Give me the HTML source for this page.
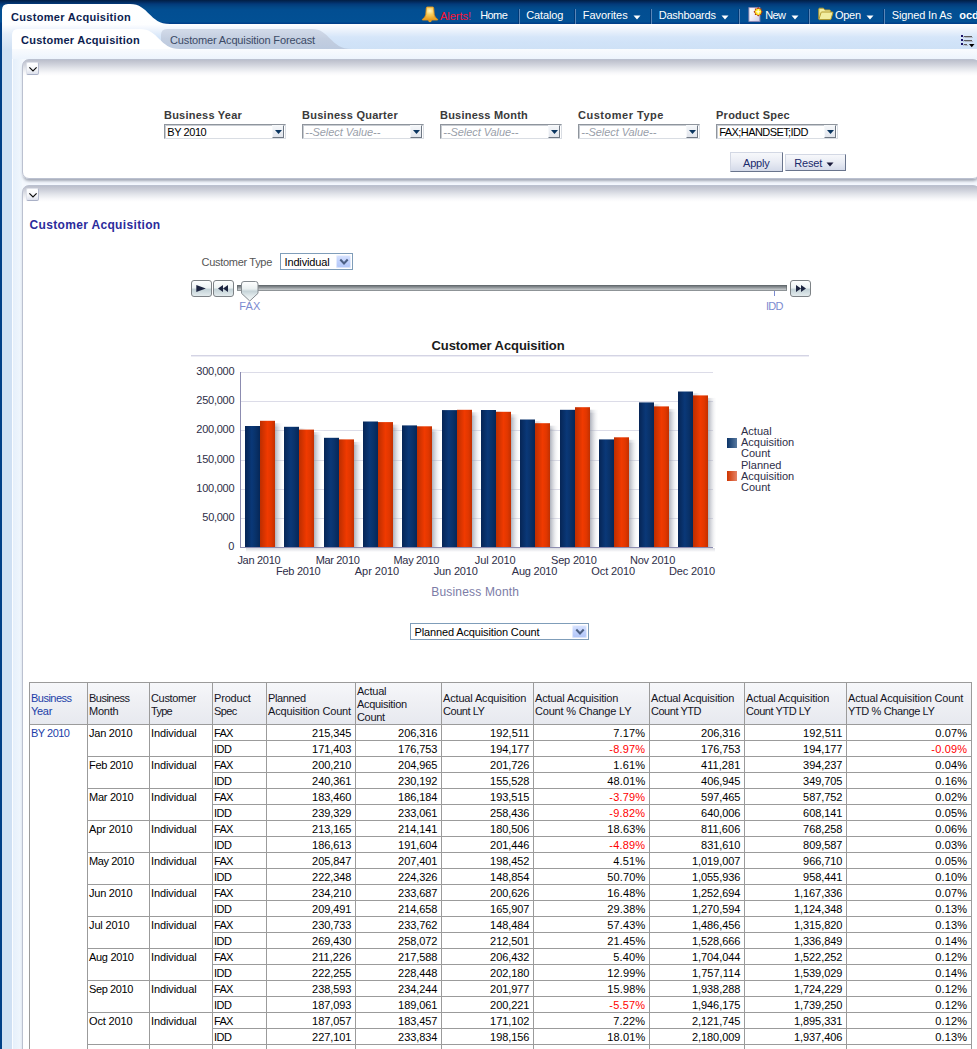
<!DOCTYPE html>
<html><head><meta charset="utf-8"><title>Customer Acquisition</title>
<style>
html,body{margin:0;padding:0;background:#fff;}
body{width:977px;height:1049px;overflow:hidden;font-family:"Liberation Sans",sans-serif;}
#page{position:relative;width:977px;height:1049px;overflow:hidden;background:#fff;}
.t{position:absolute;white-space:nowrap;font-family:"Liberation Sans",sans-serif;}
svg{position:absolute;overflow:visible}

</style></head>
<body>
<div id="page">
<div style="position:absolute;left:0px;top:24px;width:977px;height:25px;background:linear-gradient(#ffffff 0,#f6f9fe 3px,#e6effb 8px,#d6e6f9 13px,#d1e3f8 18px,#cee1f6 25px)"></div>
<div style="position:absolute;left:0px;top:49px;width:977px;height:1000px;background:#f4f8fe"></div>
<div style="position:absolute;left:2px;top:24px;width:10px;height:1025px;background:linear-gradient(#ffffff 0,#e3edf9 10px,#cfe0f3 26px,#cfe0f3 100%)"></div>
<div style="position:absolute;left:12px;top:49px;width:1px;height:1000px;background:#fbfdff"></div>
<div style="position:absolute;left:13px;top:49px;width:9px;height:1000px;background:linear-gradient(90deg,#e6f0fb,#f1f7fd)"></div>
<div style="position:absolute;left:0px;top:0px;width:2px;height:1049px;background:#003f87"></div>
<div style="position:absolute;left:0px;top:0px;width:977px;height:24px;background:linear-gradient(#021e44 0,#022b5f 2px,#033a7a 4px,#034886 7px,#024e92 10px,#025094 22px,#003f8a 23px,#003f8a 24px)"></div>
<svg style="left:0;top:0" width="200" height="30" viewBox="0 0 200 30">
<defs><linearGradient id="tg" x1="0" y1="0" x2="0" y2="1"><stop offset="0" stop-color="#ffffff"/><stop offset="1" stop-color="#fdfeff"/></linearGradient></defs>
<path d="M2,25 L2,10 Q2,4 8,4 L130,4 C149,4 149,24 170,24 L170,25 Z" fill="url(#tg)"/>
</svg>
<svg style="left:0;top:24" width="400" height="30" viewBox="0 0 400 30">
<defs>
<linearGradient id="ig" x1="0" y1="0" x2="0" y2="1"><stop offset="0" stop-color="#d3dbe9"/><stop offset="0.5" stop-color="#c3cee0"/><stop offset="1" stop-color="#bccadf"/></linearGradient>
</defs>
<path d="M161,25 L161,11 Q161,5 167,5 L312,5 C330,5 330,25 352,25 Z" fill="url(#ig)"/>
<path d="M12,26 L12,11 Q12,5 18,5 L140,5 C159,5 159,25 180,25 L180,26 Z" fill="#ffffff"/>
</svg>
<div style="position:absolute;left:12px;top:49px;width:965px;height:10px;background:linear-gradient(#f9fbfe,#edf4fd)"></div>
<span class="t" id="t0" style="left:11.00px;top:11.00px;font-size:11px;line-height:13px;font-weight:bold;font-style:normal;color:#0c1d4f;letter-spacing:0.306px;">Customer Acquisition</span>
<span class="t" id="t1" style="left:21.00px;top:34.00px;font-size:11px;line-height:13px;font-weight:bold;font-style:normal;color:#0c1d4f;letter-spacing:0.256px;">Customer Acquisition</span>
<span class="t" id="t2" style="left:170.00px;top:34.00px;font-size:11px;line-height:13px;font-weight:normal;font-style:normal;color:#3b4a66;letter-spacing:-0.144px;">Customer Acquisition Forecast</span>
<span class="t" id="t3" style="left:440.00px;top:10.00px;font-size:11px;line-height:13px;font-weight:normal;font-style:normal;color:#ff1232;letter-spacing:-0.027px;">Alerts!</span>
<span class="t" id="t4" style="left:480.20px;top:9.00px;font-size:11px;line-height:13px;font-weight:normal;font-style:normal;color:#fff;letter-spacing:-0.586px;">Home</span>
<span class="t" id="t5" style="left:526.20px;top:9.00px;font-size:11px;line-height:13px;font-weight:normal;font-style:normal;color:#fff;letter-spacing:-0.132px;">Catalog</span>
<span class="t" id="t6" style="left:582.70px;top:9.00px;font-size:11px;line-height:13px;font-weight:normal;font-style:normal;color:#fff;letter-spacing:-0.026px;">Favorites</span>
<span class="t" id="t7" style="left:658.70px;top:9.00px;font-size:11px;line-height:13px;font-weight:normal;font-style:normal;color:#fff;letter-spacing:-0.231px;">Dashboards</span>
<span class="t" id="t8" style="left:765.20px;top:9.00px;font-size:11px;line-height:13px;font-weight:normal;font-style:normal;color:#fff;letter-spacing:-0.672px;">New</span>
<span class="t" id="t9" style="left:834.90px;top:9.00px;font-size:11px;line-height:13px;font-weight:normal;font-style:normal;color:#fff;letter-spacing:-0.230px;">Open</span>
<span class="t" id="t10" style="left:891.80px;top:9.00px;font-size:11px;line-height:13px;font-weight:normal;font-style:normal;color:#fff;letter-spacing:-0.148px;">Signed In As</span>
<span class="t" id="t11" style="left:959.20px;top:9.00px;font-size:11px;line-height:13px;font-weight:bold;font-style:normal;color:#fff;letter-spacing:0.000px;">ocdm</span>
<div style="position:absolute;left:519px;top:9px;width:1px;height:15px;background:#5b86b8"></div>
<div style="position:absolute;left:518px;top:9px;width:1px;height:15px;background:#003a78"></div>
<div style="position:absolute;left:575px;top:9px;width:1px;height:15px;background:#5b86b8"></div>
<div style="position:absolute;left:574px;top:9px;width:1px;height:15px;background:#003a78"></div>
<div style="position:absolute;left:651px;top:9px;width:1px;height:15px;background:#5b86b8"></div>
<div style="position:absolute;left:650px;top:9px;width:1px;height:15px;background:#003a78"></div>
<div style="position:absolute;left:739px;top:9px;width:1px;height:15px;background:#5b86b8"></div>
<div style="position:absolute;left:738px;top:9px;width:1px;height:15px;background:#003a78"></div>
<div style="position:absolute;left:809px;top:9px;width:1px;height:15px;background:#5b86b8"></div>
<div style="position:absolute;left:808px;top:9px;width:1px;height:15px;background:#003a78"></div>
<div style="position:absolute;left:884px;top:9px;width:1px;height:15px;background:#5b86b8"></div>
<div style="position:absolute;left:883px;top:9px;width:1px;height:15px;background:#003a78"></div>
<svg style="left:632.5px;top:15px" width="8" height="5" viewBox="0 0 8 5"><path d="M0.5,0.5 L7.5,0.5 L4,4.5 Z" fill="#fff"/></svg>
<svg style="left:720.5px;top:15px" width="8" height="5" viewBox="0 0 8 5"><path d="M0.5,0.5 L7.5,0.5 L4,4.5 Z" fill="#fff"/></svg>
<svg style="left:791px;top:15px" width="8" height="5" viewBox="0 0 8 5"><path d="M0.5,0.5 L7.5,0.5 L4,4.5 Z" fill="#fff"/></svg>
<svg style="left:866px;top:15px" width="8" height="5" viewBox="0 0 8 5"><path d="M0.5,0.5 L7.5,0.5 L4,4.5 Z" fill="#fff"/></svg>
<div style="position:absolute;left:22px;top:59px;width:956px;height:118px;border:1px solid #bbc1d0;border-radius:7px;background:linear-gradient(#bbbfcc 0,#cdd0da 4px,#e6e8ed 9px,#f8f8fa 13px,#fff 16px);box-shadow:0 3px 3px -1px rgba(128,134,150,.72)"></div>
<div style="position:absolute;left:22px;top:185px;width:956px;height:900px;border:1px solid #bbc1d0;border-radius:7px;background:linear-gradient(#bbbfcc 0,#cdd0da 4px,#e6e8ed 9px,#f8f8fa 13px,#fff 16px);box-shadow:0 3px 3px -1px rgba(128,134,150,.72)"></div>
<div style="position:absolute;left:26px;top:61.5px;width:10.5px;height:11px;border:1px solid;border-color:#dfe2ea #b4bace #a9b0c6 #dfe2ea;border-radius:2px;background:linear-gradient(#ffffff,#f6f7fa 55%,#dde1ec)"></div>
<svg style="left:28.6px;top:67.1px" width="8" height="5" viewBox="0 0 8 5"><path d="M0.4,0.4 L4,4 L7.6,0.4" stroke="#0a0a0a" stroke-width="1.15" fill="none"/></svg>
<div style="position:absolute;left:26px;top:187.5px;width:10.5px;height:11px;border:1px solid;border-color:#dfe2ea #b4bace #a9b0c6 #dfe2ea;border-radius:2px;background:linear-gradient(#ffffff,#f6f7fa 55%,#dde1ec)"></div>
<svg style="left:28.6px;top:193.1px" width="8" height="5" viewBox="0 0 8 5"><path d="M0.4,0.4 L4,4 L7.6,0.4" stroke="#0a0a0a" stroke-width="1.15" fill="none"/></svg>
<span class="t" id="t12" style="left:29.50px;top:218.00px;font-size:12px;line-height:14px;font-weight:bold;font-style:normal;color:#2b2b9b;letter-spacing:0.338px;">Customer Acquisition</span>
<span class="t" id="t13" style="left:164.00px;top:109.00px;font-size:11px;line-height:13px;font-weight:bold;font-style:normal;color:#3a3a3a;letter-spacing:0.229px;">Business Year</span>
<span class="t" id="t14" style="left:302.00px;top:109.00px;font-size:11px;line-height:13px;font-weight:bold;font-style:normal;color:#3a3a3a;letter-spacing:0.268px;">Business Quarter</span>
<span class="t" id="t15" style="left:440.00px;top:109.00px;font-size:11px;line-height:13px;font-weight:bold;font-style:normal;color:#3a3a3a;letter-spacing:0.217px;">Business Month</span>
<span class="t" id="t16" style="left:578.00px;top:109.00px;font-size:11px;line-height:13px;font-weight:bold;font-style:normal;color:#3a3a3a;letter-spacing:0.518px;">Customer Type</span>
<span class="t" id="t17" style="left:716.00px;top:109.00px;font-size:11px;line-height:13px;font-weight:bold;font-style:normal;color:#3a3a3a;letter-spacing:0.258px;">Product Spec</span>
<div style="position:absolute;left:164px;top:124px;width:120px;height:13px;border:1px solid;border-color:#8f959d #d9dde3 #d9dde3 #8f959d;background:#fff"></div>
<div style="position:absolute;left:165px;top:125px;width:119px;height:12px;border-left:1px solid #c9cdd3;border-top:1px solid #c9cdd3"></div>
<div style="position:absolute;left:272px;top:125px;width:10px;height:11px;border:1px solid;border-color:#f6f8fa #6f7884 #6f7884 #f6f8fa;background:linear-gradient(#f4f6f9,#e1e5ec)"></div>
<svg style="left:275px;top:130px" width="7" height="4" viewBox="0 0 7 4"><path d="M0,0 L7,0 L3.5,4 Z" fill="#0a3560"/></svg>
<span class="t" id="t18" style="left:167.30px;top:126.00px;font-size:11px;line-height:13px;font-weight:normal;font-style:normal;color:#000;letter-spacing:-0.431px;">BY 2010</span>
<div style="position:absolute;left:302px;top:124px;width:120px;height:13px;border:1px solid;border-color:#8f959d #d9dde3 #d9dde3 #8f959d;background:#fff"></div>
<div style="position:absolute;left:303px;top:125px;width:119px;height:12px;border-left:1px solid #c9cdd3;border-top:1px solid #c9cdd3"></div>
<div style="position:absolute;left:410px;top:125px;width:10px;height:11px;border:1px solid;border-color:#f6f8fa #6f7884 #6f7884 #f6f8fa;background:linear-gradient(#f4f6f9,#e1e5ec)"></div>
<svg style="left:413px;top:130px" width="7" height="4" viewBox="0 0 7 4"><path d="M0,0 L7,0 L3.5,4 Z" fill="#0a3560"/></svg>
<span class="t" id="t19" style="left:305.30px;top:126.00px;font-size:11px;line-height:13px;font-weight:normal;font-style:italic;color:#9aa0aa;letter-spacing:-0.063px;">--Select Value--</span>
<div style="position:absolute;left:440px;top:124px;width:120px;height:13px;border:1px solid;border-color:#8f959d #d9dde3 #d9dde3 #8f959d;background:#fff"></div>
<div style="position:absolute;left:441px;top:125px;width:119px;height:12px;border-left:1px solid #c9cdd3;border-top:1px solid #c9cdd3"></div>
<div style="position:absolute;left:548px;top:125px;width:10px;height:11px;border:1px solid;border-color:#f6f8fa #6f7884 #6f7884 #f6f8fa;background:linear-gradient(#f4f6f9,#e1e5ec)"></div>
<svg style="left:551px;top:130px" width="7" height="4" viewBox="0 0 7 4"><path d="M0,0 L7,0 L3.5,4 Z" fill="#0a3560"/></svg>
<span class="t" id="t20" style="left:443.30px;top:126.00px;font-size:11px;line-height:13px;font-weight:normal;font-style:italic;color:#9aa0aa;letter-spacing:-0.063px;">--Select Value--</span>
<div style="position:absolute;left:578px;top:124px;width:120px;height:13px;border:1px solid;border-color:#8f959d #d9dde3 #d9dde3 #8f959d;background:#fff"></div>
<div style="position:absolute;left:579px;top:125px;width:119px;height:12px;border-left:1px solid #c9cdd3;border-top:1px solid #c9cdd3"></div>
<div style="position:absolute;left:686px;top:125px;width:10px;height:11px;border:1px solid;border-color:#f6f8fa #6f7884 #6f7884 #f6f8fa;background:linear-gradient(#f4f6f9,#e1e5ec)"></div>
<svg style="left:689px;top:130px" width="7" height="4" viewBox="0 0 7 4"><path d="M0,0 L7,0 L3.5,4 Z" fill="#0a3560"/></svg>
<span class="t" id="t21" style="left:581.30px;top:126.00px;font-size:11px;line-height:13px;font-weight:normal;font-style:italic;color:#9aa0aa;letter-spacing:-0.063px;">--Select Value--</span>
<div style="position:absolute;left:716px;top:124px;width:120px;height:13px;border:1px solid;border-color:#8f959d #d9dde3 #d9dde3 #8f959d;background:#fff"></div>
<div style="position:absolute;left:717px;top:125px;width:119px;height:12px;border-left:1px solid #c9cdd3;border-top:1px solid #c9cdd3"></div>
<div style="position:absolute;left:824px;top:125px;width:10px;height:11px;border:1px solid;border-color:#f6f8fa #6f7884 #6f7884 #f6f8fa;background:linear-gradient(#f4f6f9,#e1e5ec)"></div>
<svg style="left:827px;top:130px" width="7" height="4" viewBox="0 0 7 4"><path d="M0,0 L7,0 L3.5,4 Z" fill="#0a3560"/></svg>
<span class="t" id="t22" style="left:719.30px;top:126.00px;font-size:11px;line-height:13px;font-weight:normal;font-style:normal;color:#000;letter-spacing:-0.579px;">FAX;HANDSET;IDD</span>
<div style="position:absolute;left:730px;top:152px;width:51px;height:18px;border:1px solid;border-color:#d3d8e4 #69748c #69748c #d3d8e4;background:linear-gradient(#f7f8fb,#e9ecf4 50%,#d4dae9)"></div>
<div style="position:absolute;left:785px;top:153.5px;width:59px;height:15.5px;border:1px solid;border-color:#d3d8e4 #69748c #69748c #d3d8e4;background:linear-gradient(#f7f8fb,#e9ecf4 50%,#d4dae9)"></div>
<span class="t" id="t23" style="left:743.00px;top:157.00px;font-size:11px;line-height:13px;font-weight:normal;font-style:normal;color:#1a2a6c;letter-spacing:-0.206px;">Apply</span>
<span class="t" id="t24" style="left:794.20px;top:157.00px;font-size:11px;line-height:13px;font-weight:normal;font-style:normal;color:#1a2a6c;letter-spacing:-0.150px;">Reset</span>
<svg style="left:826px;top:162.4px" width="8" height="5" viewBox="0 0 8 5"><path d="M0.5,0.5 L7.5,0.5 L4,4.5 Z" fill="#1a1a3a"/></svg>
<span class="t" id="t25" style="left:201.60px;top:256.00px;font-size:11px;line-height:13px;font-weight:normal;font-style:normal;color:#555;letter-spacing:-0.307px;">Customer Type</span>
<div style="position:absolute;left:280px;top:253px;width:71px;height:15px;border:1px solid #7f9db9;background:#fff"></div>
<div style="position:absolute;left:336px;top:255px;width:15px;height:13px;border-radius:2px;background:linear-gradient(#d9e4fe,#c3d3fd 45%,#b4c8f8 90%,#a9bdf0);box-shadow:inset 0 0 0 1px rgba(255,255,255,.55)"></div>
<svg style="left:340px;top:259px" width="8" height="6" viewBox="0 0 8 6"><path d="M0.3,0.6 L4,4.4 L7.7,0.6" stroke="#4d6185" stroke-width="2.1" fill="none"/></svg>
<span class="t" id="t26" style="left:284.50px;top:256.00px;font-size:11px;line-height:13px;font-weight:normal;font-style:normal;color:#000;letter-spacing:-0.148px;">Individual</span>
<div style="position:absolute;left:410px;top:623px;width:177px;height:15px;border:1px solid #7f9db9;background:#fff"></div>
<div style="position:absolute;left:572px;top:625px;width:15px;height:13px;border-radius:2px;background:linear-gradient(#d9e4fe,#c3d3fd 45%,#b4c8f8 90%,#a9bdf0);box-shadow:inset 0 0 0 1px rgba(255,255,255,.55)"></div>
<svg style="left:576px;top:629px" width="8" height="6" viewBox="0 0 8 6"><path d="M0.3,0.6 L4,4.4 L7.7,0.6" stroke="#4d6185" stroke-width="2.1" fill="none"/></svg>
<span class="t" id="t27" style="left:414.50px;top:626.00px;font-size:11px;line-height:13px;font-weight:normal;font-style:normal;color:#000;letter-spacing:-0.137px;">Planned Acquisition Count</span>
<div style="position:absolute;left:191px;top:280px;width:19px;height:15px;border:1px solid #7d8286;border-radius:3px;background:linear-gradient(#fdfefe,#edf2f3 45%,#c3d2d7 56%,#e3ebed);"></div>
<div style="position:absolute;left:212.5px;top:280px;width:19.5px;height:15px;border:1px solid #7d8286;border-radius:3px;background:linear-gradient(#fdfefe,#edf2f3 45%,#c3d2d7 56%,#e3ebed);"></div>
<div style="position:absolute;left:790px;top:280px;width:19px;height:15px;border:1px solid #7d8286;border-radius:3px;background:linear-gradient(#fdfefe,#edf2f3 45%,#c3d2d7 56%,#e3ebed);"></div>
<svg style="left:196px;top:285px" width="10" height="7" viewBox="0 0 10 7"><path d="M0.3,0 L9.8,3.5 L0.3,7 Z" fill="#1c2440"/></svg>
<svg style="left:218px;top:285px" width="10" height="7" viewBox="0 0 10 7"><path d="M5,0 L5,7 L0,3.5 Z M10,0 L10,7 L5,3.5 Z" fill="#1c2440"/></svg>
<svg style="left:796px;top:285px" width="10" height="7" viewBox="0 0 10 7"><path d="M0,0 L0,7 L5,3.5 Z M5,0 L5,7 L10,3.5 Z" fill="#1c2440"/></svg>
<div style="position:absolute;left:237px;top:285px;width:550px;height:6px;background:linear-gradient(#6d7377 0,#7f8589 30%,#b9bec1 70%,#d6d9db 100%);border:0;box-shadow:inset 0 0 0 1px rgba(90,96,100,.55)"></div>
<div style="position:absolute;left:774px;top:291px;width:1px;height:5px;background:#7b8bd0"></div>
<svg style="left:240.6px;top:281px" width="18" height="21" viewBox="0 0 18 21">
<defs><linearGradient id="th" x1="0" y1="0" x2="0" y2="1"><stop offset="0" stop-color="#ffffff"/><stop offset="0.38" stop-color="#eaf0f1"/><stop offset="0.5" stop-color="#c6d4d8"/><stop offset="0.75" stop-color="#e3ebed"/><stop offset="1" stop-color="#f6f9f9"/></linearGradient></defs>
<path d="M3,0.5 L14.5,0.5 Q17,0.5 17,3 L17,12.3 L8.75,20 L0.5,12.3 L0.5,3 Q0.5,0.5 3,0.5 Z" fill="url(#th)" stroke="#858b90" stroke-width="1"/></svg>
<span class="t" id="t28" style="left:239.30px;top:300.00px;font-size:11px;line-height:13px;font-weight:normal;font-style:normal;color:#7b8bd0;letter-spacing:0.068px;">FAX</span>
<span class="t" id="t29" style="left:766.00px;top:300.00px;font-size:11px;line-height:13px;font-weight:normal;font-style:normal;color:#7b8bd0;letter-spacing:-0.717px;">IDD</span>
<span class="t" id="t30" style="left:298.00px;width:400px;text-align:center;top:338.00px;font-size:13px;line-height:15px;font-weight:bold;font-style:normal;color:#1a1a1a;letter-spacing:-0.079px;">Customer Acquisition</span>
<div style="position:absolute;left:191px;top:355px;width:618px;height:1px;background:#d4d4e4"></div>
<div style="position:absolute;left:191px;top:356px;width:618px;height:1px;background:#ececf4"></div>
<div style="position:absolute;left:241px;top:518px;width:472px;height:1px;background:#dcdce8"></div>
<div style="position:absolute;left:241px;top:489px;width:472px;height:1px;background:#dcdce8"></div>
<div style="position:absolute;left:241px;top:460px;width:472px;height:1px;background:#dcdce8"></div>
<div style="position:absolute;left:241px;top:430px;width:472px;height:1px;background:#dcdce8"></div>
<div style="position:absolute;left:241px;top:401px;width:472px;height:1px;background:#dcdce8"></div>
<div style="position:absolute;left:241px;top:372px;width:472px;height:1px;background:#dcdce8"></div>
<span class="t" id="t31" style="right:742.70px;top:540.00px;font-size:11px;line-height:13px;font-weight:normal;font-style:normal;color:#2e2e48;letter-spacing:0.000px;">0</span>
<span class="t" id="t32" style="right:742.70px;top:511.00px;font-size:11px;line-height:13px;font-weight:normal;font-style:normal;color:#2e2e48;letter-spacing:-0.276px;">50,000</span>
<span class="t" id="t33" style="right:742.70px;top:482.00px;font-size:11px;line-height:13px;font-weight:normal;font-style:normal;color:#2e2e48;letter-spacing:-0.252px;">100,000</span>
<span class="t" id="t34" style="right:742.70px;top:453.00px;font-size:11px;line-height:13px;font-weight:normal;font-style:normal;color:#2e2e48;letter-spacing:-0.252px;">150,000</span>
<span class="t" id="t35" style="right:742.70px;top:423.00px;font-size:11px;line-height:13px;font-weight:normal;font-style:normal;color:#2e2e48;letter-spacing:-0.252px;">200,000</span>
<span class="t" id="t36" style="right:742.70px;top:394.00px;font-size:11px;line-height:13px;font-weight:normal;font-style:normal;color:#2e2e48;letter-spacing:-0.252px;">250,000</span>
<span class="t" id="t37" style="right:742.70px;top:365.00px;font-size:11px;line-height:13px;font-weight:normal;font-style:normal;color:#2e2e48;letter-spacing:-0.252px;">300,000</span>
<svg style="left:0;top:0" width="977" height="620" viewBox="0 0 977 620"><defs><linearGradient id="gb" x1="0" y1="0" x2="1" y2="0"><stop offset="0" stop-color="#062555"/><stop offset="0.45" stop-color="#0a3878"/><stop offset="0.7" stop-color="#09326a"/><stop offset="1" stop-color="#062758"/></linearGradient><linearGradient id="go" x1="0" y1="0" x2="1" y2="0"><stop offset="0" stop-color="#bc2e00"/><stop offset="0.5" stop-color="#f03a00"/><stop offset="0.75" stop-color="#e23700"/><stop offset="1" stop-color="#c23000"/></linearGradient><linearGradient id="gs" x1="0" y1="0" x2="1" y2="0"><stop offset="0" stop-color="#8e93a2" stop-opacity=".72"/><stop offset="0.35" stop-color="#a4a8b4" stop-opacity=".45"/><stop offset="0.7" stop-color="#c0c3cc" stop-opacity=".18"/><stop offset="1" stop-color="#d8dae2" stop-opacity="0"/></linearGradient><filter id="bl" x="-50%" y="-10%" width="200%" height="120%"><feGaussianBlur stdDeviation="1.6"/></filter><clipPath id="pc"><rect x="241" y="360" width="480" height="187"/></clipPath></defs><g clip-path="url(#pc)"><rect x="275" y="423.3" width="8.5" height="123.7" fill="url(#gs)"/><rect x="274" y="421.8" width="9" height="4" fill="#fff" opacity=".55" filter="url(#bl)"/><rect x="299" y="428.8" width="8" height="2.8" fill="url(#gs)" filter="url(#bl)"/><rect x="314" y="432.1" width="8.5" height="114.9" fill="url(#gs)"/><rect x="313" y="430.6" width="9" height="4" fill="#fff" opacity=".55" filter="url(#bl)"/><rect x="339" y="439.8" width="8" height="1.6" fill="url(#gs)" filter="url(#bl)"/><rect x="354" y="441.9" width="8.5" height="105.1" fill="url(#gs)"/><rect x="353" y="440.4" width="9" height="4" fill="#fff" opacity=".55" filter="url(#bl)"/><rect x="378" y="423.5" width="8" height="0.6" fill="url(#gs)" filter="url(#bl)"/><rect x="393" y="424.6" width="8.5" height="122.4" fill="url(#gs)"/><rect x="392" y="423.1" width="9" height="4" fill="#fff" opacity=".55" filter="url(#bl)"/><rect x="417" y="427.4" width="8" height="0.9" fill="url(#gs)" filter="url(#bl)"/><rect x="432" y="428.8" width="8.5" height="118.2" fill="url(#gs)"/><rect x="431" y="427.3" width="9" height="4" fill="#fff" opacity=".55" filter="url(#bl)"/><rect x="472" y="412.3" width="8.5" height="134.7" fill="url(#gs)"/><rect x="471" y="410.8" width="9" height="4" fill="#fff" opacity=".55" filter="url(#bl)"/><rect x="496" y="412.0" width="8" height="1.8" fill="url(#gs)" filter="url(#bl)"/><rect x="511" y="414.3" width="8.5" height="132.7" fill="url(#gs)"/><rect x="510" y="412.8" width="9" height="4" fill="#fff" opacity=".55" filter="url(#bl)"/><rect x="535" y="421.5" width="8" height="3.7" fill="url(#gs)" filter="url(#bl)"/><rect x="550" y="425.7" width="8.5" height="121.3" fill="url(#gs)"/><rect x="549" y="424.2" width="9" height="4" fill="#fff" opacity=".55" filter="url(#bl)"/><rect x="590" y="409.7" width="8.5" height="137.3" fill="url(#gs)"/><rect x="589" y="408.2" width="9" height="4" fill="#fff" opacity=".55" filter="url(#bl)"/><rect x="629" y="439.8" width="8.5" height="107.2" fill="url(#gs)"/><rect x="628" y="438.3" width="9" height="4" fill="#fff" opacity=".55" filter="url(#bl)"/><rect x="654" y="404.4" width="8" height="4.0" fill="url(#gs)" filter="url(#bl)"/><rect x="669" y="408.9" width="8.5" height="138.1" fill="url(#gs)"/><rect x="668" y="407.4" width="9" height="4" fill="#fff" opacity=".55" filter="url(#bl)"/><rect x="693" y="393.5" width="8" height="4.0" fill="url(#gs)" filter="url(#bl)"/><rect x="708" y="397.9" width="8.5" height="149.1" fill="url(#gs)"/><rect x="707" y="396.4" width="9" height="4" fill="#fff" opacity=".55" filter="url(#bl)"/><rect x="245" y="426.0" width="15" height="121.0" fill="url(#gb)"/><rect x="260" y="420.8" width="15" height="126.2" fill="url(#go)"/><rect x="284" y="426.8" width="15" height="120.2" fill="url(#gb)"/><rect x="299" y="429.6" width="15" height="117.4" fill="url(#go)"/><rect x="324" y="437.8" width="15" height="109.2" fill="url(#gb)"/><rect x="339" y="439.4" width="15" height="107.6" fill="url(#go)"/><rect x="363" y="421.5" width="15" height="125.5" fill="url(#gb)"/><rect x="378" y="422.1" width="15" height="124.9" fill="url(#go)"/><rect x="402" y="425.4" width="15" height="121.6" fill="url(#gb)"/><rect x="417" y="426.3" width="15" height="120.7" fill="url(#go)"/><rect x="442" y="410.1" width="15" height="136.9" fill="url(#gb)"/><rect x="457" y="409.8" width="15" height="137.2" fill="url(#go)"/><rect x="481" y="410.0" width="15" height="137.0" fill="url(#gb)"/><rect x="496" y="411.8" width="15" height="135.2" fill="url(#go)"/><rect x="520" y="419.5" width="15" height="127.5" fill="url(#gb)"/><rect x="535" y="423.2" width="15" height="123.8" fill="url(#go)"/><rect x="560" y="409.8" width="15" height="137.2" fill="url(#gb)"/><rect x="575" y="407.2" width="15" height="139.8" fill="url(#go)"/><rect x="599" y="439.4" width="15" height="107.6" fill="url(#gb)"/><rect x="614" y="437.3" width="15" height="109.7" fill="url(#go)"/><rect x="639" y="402.4" width="15" height="144.6" fill="url(#gb)"/><rect x="654" y="406.4" width="15" height="140.6" fill="url(#go)"/><rect x="678" y="391.5" width="15" height="155.5" fill="url(#gb)"/><rect x="693" y="395.4" width="15" height="151.6" fill="url(#go)"/></g></svg>
<div style="position:absolute;left:246px;top:548px;width:469px;height:4px;background:linear-gradient(rgba(150,155,172,.38),rgba(150,155,172,0))"></div>
<div style="position:absolute;left:240px;top:372px;width:1px;height:176px;background:#8c8cb0"></div>
<div style="position:absolute;left:240px;top:547px;width:473px;height:1px;background:#8c8cb0"></div>
<span class="t" id="t38" style="left:58.88px;width:400px;text-align:center;top:554.00px;font-size:11px;line-height:13px;font-weight:normal;font-style:normal;color:#2e2e48;letter-spacing:-0.283px;">Jan 2010</span>
<span class="t" id="t39" style="left:98.25px;width:400px;text-align:center;top:565.00px;font-size:11px;line-height:13px;font-weight:normal;font-style:normal;color:#2e2e48;letter-spacing:-0.261px;">Feb 2010</span>
<span class="t" id="t40" style="left:137.62px;width:400px;text-align:center;top:554.00px;font-size:11px;line-height:13px;font-weight:normal;font-style:normal;color:#2e2e48;letter-spacing:-0.359px;">Mar 2010</span>
<span class="t" id="t41" style="left:176.98px;width:400px;text-align:center;top:565.00px;font-size:11px;line-height:13px;font-weight:normal;font-style:normal;color:#2e2e48;letter-spacing:-0.032px;">Apr 2010</span>
<span class="t" id="t42" style="left:216.35px;width:400px;text-align:center;top:554.00px;font-size:11px;line-height:13px;font-weight:normal;font-style:normal;color:#2e2e48;letter-spacing:-0.339px;">May 2010</span>
<span class="t" id="t43" style="left:255.72px;width:400px;text-align:center;top:565.00px;font-size:11px;line-height:13px;font-weight:normal;font-style:normal;color:#2e2e48;letter-spacing:-0.158px;">Jun 2010</span>
<span class="t" id="t44" style="left:295.08px;width:400px;text-align:center;top:554.00px;font-size:11px;line-height:13px;font-weight:normal;font-style:normal;color:#2e2e48;letter-spacing:-0.125px;">Jul 2010</span>
<span class="t" id="t45" style="left:334.45px;width:400px;text-align:center;top:565.00px;font-size:11px;line-height:13px;font-weight:normal;font-style:normal;color:#2e2e48;letter-spacing:-0.237px;">Aug 2010</span>
<span class="t" id="t46" style="left:373.82px;width:400px;text-align:center;top:554.00px;font-size:11px;line-height:13px;font-weight:normal;font-style:normal;color:#2e2e48;letter-spacing:-0.189px;">Sep 2010</span>
<span class="t" id="t47" style="left:413.18px;width:400px;text-align:center;top:565.00px;font-size:11px;line-height:13px;font-weight:normal;font-style:normal;color:#2e2e48;letter-spacing:-0.130px;">Oct 2010</span>
<span class="t" id="t48" style="left:452.55px;width:400px;text-align:center;top:554.00px;font-size:11px;line-height:13px;font-weight:normal;font-style:normal;color:#2e2e48;letter-spacing:-0.262px;">Nov 2010</span>
<span class="t" id="t49" style="left:491.92px;width:400px;text-align:center;top:565.00px;font-size:11px;line-height:13px;font-weight:normal;font-style:normal;color:#2e2e48;letter-spacing:-0.137px;">Dec 2010</span>
<span class="t" id="t50" style="left:275.20px;width:400px;text-align:center;top:585.00px;font-size:12px;line-height:14px;font-weight:normal;font-style:normal;color:#7c7ca6;letter-spacing:0.187px;">Business Month</span>
<div style="position:absolute;left:727px;top:438px;width:10px;height:10px;background:linear-gradient(90deg,#0b3468,#58799f)"></div>
<div style="position:absolute;left:727px;top:471px;width:10px;height:10px;background:linear-gradient(90deg,#cf3500,#e58468)"></div>
<span class="t" id="t51" style="left:741.00px;top:425.00px;font-size:11px;line-height:13px;font-weight:normal;font-style:normal;color:#2e2e48;letter-spacing:0.000px;">Actual</span>
<span class="t" id="t52" style="left:741.00px;top:436.00px;font-size:11px;line-height:13px;font-weight:normal;font-style:normal;color:#2e2e48;letter-spacing:0.000px;">Acquisition</span>
<span class="t" id="t53" style="left:741.00px;top:447.00px;font-size:11px;line-height:13px;font-weight:normal;font-style:normal;color:#2e2e48;letter-spacing:0.000px;">Count</span>
<span class="t" id="t54" style="left:741.00px;top:459.00px;font-size:11px;line-height:13px;font-weight:normal;font-style:normal;color:#2e2e48;letter-spacing:0.000px;">Planned</span>
<span class="t" id="t55" style="left:741.00px;top:470.00px;font-size:11px;line-height:13px;font-weight:normal;font-style:normal;color:#2e2e48;letter-spacing:0.000px;">Acquisition</span>
<span class="t" id="t56" style="left:741.00px;top:481.00px;font-size:11px;line-height:13px;font-weight:normal;font-style:normal;color:#2e2e48;letter-spacing:0.000px;">Count</span>
<div style="position:absolute;left:30px;top:683px;width:941px;height:41px;background:linear-gradient(#f6f7fa 0,#eff0f4 45%,#e7e9ef 100%)"></div>
<div style="position:absolute;left:30px;top:725px;width:941px;height:330px;background:#fff"></div>
<div style="position:absolute;left:29px;top:682px;width:943px;height:1px;background:#9b9b9b"></div>
<div style="position:absolute;left:29px;top:724px;width:943px;height:1px;background:#9b9b9b"></div>
<div style="position:absolute;left:29px;top:682px;width:1px;height:380px;background:#9b9b9b"></div>
<div style="position:absolute;left:87px;top:682px;width:1px;height:380px;background:#9b9b9b"></div>
<div style="position:absolute;left:149px;top:682px;width:1px;height:380px;background:#9b9b9b"></div>
<div style="position:absolute;left:212px;top:682px;width:1px;height:380px;background:#9b9b9b"></div>
<div style="position:absolute;left:266px;top:682px;width:1px;height:380px;background:#9b9b9b"></div>
<div style="position:absolute;left:355px;top:682px;width:1px;height:380px;background:#9b9b9b"></div>
<div style="position:absolute;left:441px;top:682px;width:1px;height:380px;background:#9b9b9b"></div>
<div style="position:absolute;left:533px;top:682px;width:1px;height:380px;background:#9b9b9b"></div>
<div style="position:absolute;left:649px;top:682px;width:1px;height:380px;background:#9b9b9b"></div>
<div style="position:absolute;left:744px;top:682px;width:1px;height:380px;background:#9b9b9b"></div>
<div style="position:absolute;left:846px;top:682px;width:1px;height:380px;background:#9b9b9b"></div>
<div style="position:absolute;left:971px;top:682px;width:1px;height:380px;background:#9b9b9b"></div>
<div style="position:absolute;left:212px;top:740px;width:760px;height:1px;background:#9b9b9b"></div>
<div style="position:absolute;left:87px;top:756px;width:885px;height:1px;background:#9b9b9b"></div>
<div style="position:absolute;left:212px;top:772px;width:760px;height:1px;background:#9b9b9b"></div>
<div style="position:absolute;left:87px;top:788px;width:885px;height:1px;background:#9b9b9b"></div>
<div style="position:absolute;left:212px;top:804px;width:760px;height:1px;background:#9b9b9b"></div>
<div style="position:absolute;left:87px;top:820px;width:885px;height:1px;background:#9b9b9b"></div>
<div style="position:absolute;left:212px;top:836px;width:760px;height:1px;background:#9b9b9b"></div>
<div style="position:absolute;left:87px;top:852px;width:885px;height:1px;background:#9b9b9b"></div>
<div style="position:absolute;left:212px;top:868px;width:760px;height:1px;background:#9b9b9b"></div>
<div style="position:absolute;left:87px;top:884px;width:885px;height:1px;background:#9b9b9b"></div>
<div style="position:absolute;left:212px;top:900px;width:760px;height:1px;background:#9b9b9b"></div>
<div style="position:absolute;left:87px;top:916px;width:885px;height:1px;background:#9b9b9b"></div>
<div style="position:absolute;left:212px;top:932px;width:760px;height:1px;background:#9b9b9b"></div>
<div style="position:absolute;left:87px;top:948px;width:885px;height:1px;background:#9b9b9b"></div>
<div style="position:absolute;left:212px;top:964px;width:760px;height:1px;background:#9b9b9b"></div>
<div style="position:absolute;left:87px;top:980px;width:885px;height:1px;background:#9b9b9b"></div>
<div style="position:absolute;left:212px;top:996px;width:760px;height:1px;background:#9b9b9b"></div>
<div style="position:absolute;left:87px;top:1012px;width:885px;height:1px;background:#9b9b9b"></div>
<div style="position:absolute;left:212px;top:1028px;width:760px;height:1px;background:#9b9b9b"></div>
<div style="position:absolute;left:87px;top:1044px;width:885px;height:1px;background:#9b9b9b"></div>
<div style="position:absolute;left:212px;top:1060px;width:760px;height:1px;background:#9b9b9b"></div>
<span class="t" id="t57" style="left:31.00px;top:692.00px;font-size:11px;line-height:13px;font-weight:normal;font-style:normal;color:#1c3ea8;letter-spacing:-0.518px;">Business</span>
<span class="t" id="t58" style="left:31.00px;top:705.00px;font-size:11px;line-height:13px;font-weight:normal;font-style:normal;color:#1c3ea8;letter-spacing:-0.309px;">Year</span>
<span class="t" id="t59" style="left:89.00px;top:692.00px;font-size:11px;line-height:13px;font-weight:normal;font-style:normal;color:#15151f;letter-spacing:-0.518px;">Business</span>
<span class="t" id="t60" style="left:89.00px;top:705.00px;font-size:11px;line-height:13px;font-weight:normal;font-style:normal;color:#15151f;letter-spacing:-0.257px;">Month</span>
<span class="t" id="t61" style="left:151.00px;top:692.00px;font-size:11px;line-height:13px;font-weight:normal;font-style:normal;color:#15151f;letter-spacing:-0.336px;">Customer</span>
<span class="t" id="t62" style="left:151.00px;top:705.00px;font-size:11px;line-height:13px;font-weight:normal;font-style:normal;color:#15151f;letter-spacing:-0.715px;">Type</span>
<span class="t" id="t63" style="left:214.00px;top:692.00px;font-size:11px;line-height:13px;font-weight:normal;font-style:normal;color:#15151f;letter-spacing:-0.173px;">Product</span>
<span class="t" id="t64" style="left:214.00px;top:705.00px;font-size:11px;line-height:13px;font-weight:normal;font-style:normal;color:#15151f;letter-spacing:-0.618px;">Spec</span>
<span class="t" id="t65" style="left:268.00px;top:692.00px;font-size:11px;line-height:13px;font-weight:normal;font-style:normal;color:#15151f;letter-spacing:-0.382px;">Planned</span>
<span class="t" id="t66" style="left:268.00px;top:705.00px;font-size:11px;line-height:13px;font-weight:normal;font-style:normal;color:#15151f;letter-spacing:-0.154px;">Acquisition Count</span>
<span class="t" id="t67" style="left:357.00px;top:685.00px;font-size:11px;line-height:13px;font-weight:normal;font-style:normal;color:#15151f;letter-spacing:-0.214px;">Actual</span>
<span class="t" id="t68" style="left:357.00px;top:698.00px;font-size:11px;line-height:13px;font-weight:normal;font-style:normal;color:#15151f;letter-spacing:-0.309px;">Acquisition</span>
<span class="t" id="t69" style="left:357.00px;top:711.00px;font-size:11px;line-height:13px;font-weight:normal;font-style:normal;color:#15151f;letter-spacing:-0.334px;">Count</span>
<span class="t" id="t70" style="left:443.00px;top:692.00px;font-size:11px;line-height:13px;font-weight:normal;font-style:normal;color:#15151f;letter-spacing:-0.163px;">Actual Acquisition</span>
<span class="t" id="t71" style="left:443.00px;top:705.00px;font-size:11px;line-height:13px;font-weight:normal;font-style:normal;color:#15151f;letter-spacing:-0.445px;">Count LY</span>
<span class="t" id="t72" style="left:535.00px;top:692.00px;font-size:11px;line-height:13px;font-weight:normal;font-style:normal;color:#15151f;letter-spacing:-0.163px;">Actual Acquisition</span>
<span class="t" id="t73" style="left:535.00px;top:705.00px;font-size:11px;line-height:13px;font-weight:normal;font-style:normal;color:#15151f;letter-spacing:-0.187px;">Count % Change LY</span>
<span class="t" id="t74" style="left:651.00px;top:692.00px;font-size:11px;line-height:13px;font-weight:normal;font-style:normal;color:#15151f;letter-spacing:-0.163px;">Actual Acquisition</span>
<span class="t" id="t75" style="left:651.00px;top:705.00px;font-size:11px;line-height:13px;font-weight:normal;font-style:normal;color:#15151f;letter-spacing:-0.469px;">Count YTD</span>
<span class="t" id="t76" style="left:746.00px;top:692.00px;font-size:11px;line-height:13px;font-weight:normal;font-style:normal;color:#15151f;letter-spacing:-0.163px;">Actual Acquisition</span>
<span class="t" id="t77" style="left:746.00px;top:705.00px;font-size:11px;line-height:13px;font-weight:normal;font-style:normal;color:#15151f;letter-spacing:-0.443px;">Count YTD LY</span>
<span class="t" id="t78" style="left:848.00px;top:692.00px;font-size:11px;line-height:13px;font-weight:normal;font-style:normal;color:#15151f;letter-spacing:-0.143px;">Actual Acquisition Count</span>
<span class="t" id="t79" style="left:848.00px;top:705.00px;font-size:11px;line-height:13px;font-weight:normal;font-style:normal;color:#15151f;letter-spacing:-0.375px;">YTD % Change LY</span>
<span class="t" id="t80" style="left:31.00px;top:727.00px;font-size:11px;line-height:13px;font-weight:normal;font-style:normal;color:#1c3ea8;letter-spacing:-0.502px;">BY 2010</span>
<span class="t" id="t81" style="left:89.00px;top:727.00px;font-size:11px;line-height:13px;font-weight:normal;font-style:normal;color:#000;letter-spacing:-0.234px;">Jan 2010</span>
<span class="t" id="t82" style="left:151.00px;top:727.00px;font-size:11px;line-height:13px;font-weight:normal;font-style:normal;color:#000;letter-spacing:-0.098px;">Individual</span>
<span class="t" id="t83" style="left:214.00px;top:727.00px;font-size:11px;line-height:13px;font-weight:normal;font-style:normal;color:#000;letter-spacing:-0.732px;">FAX</span>
<span class="t" id="t84" style="right:625.70px;top:727.00px;font-size:11px;line-height:13px;font-weight:normal;font-style:normal;color:#000;letter-spacing:-0.081px;">215,345</span>
<span class="t" id="t85" style="right:539.70px;top:727.00px;font-size:11px;line-height:13px;font-weight:normal;font-style:normal;color:#000;letter-spacing:-0.081px;">206,316</span>
<span class="t" id="t86" style="right:447.70px;top:727.00px;font-size:11px;line-height:13px;font-weight:normal;font-style:normal;color:#000;letter-spacing:0.035px;">192,511</span>
<span class="t" id="t87" style="right:331.70px;top:727.00px;font-size:11px;line-height:13px;font-weight:normal;font-style:normal;color:#000;letter-spacing:0.159px;">7.17%</span>
<span class="t" id="t88" style="right:236.70px;top:727.00px;font-size:11px;line-height:13px;font-weight:normal;font-style:normal;color:#000;letter-spacing:-0.081px;">206,316</span>
<span class="t" id="t89" style="right:134.70px;top:727.00px;font-size:11px;line-height:13px;font-weight:normal;font-style:normal;color:#000;letter-spacing:0.035px;">192,511</span>
<span class="t" id="t90" style="right:9.70px;top:727.00px;font-size:11px;line-height:13px;font-weight:normal;font-style:normal;color:#000;letter-spacing:0.159px;">0.07%</span>
<span class="t" id="t91" style="left:214.00px;top:743.00px;font-size:11px;line-height:13px;font-weight:normal;font-style:normal;color:#000;letter-spacing:-0.551px;">IDD</span>
<span class="t" id="t92" style="right:625.70px;top:743.00px;font-size:11px;line-height:13px;font-weight:normal;font-style:normal;color:#000;letter-spacing:-0.081px;">171,403</span>
<span class="t" id="t93" style="right:539.70px;top:743.00px;font-size:11px;line-height:13px;font-weight:normal;font-style:normal;color:#000;letter-spacing:-0.081px;">176,753</span>
<span class="t" id="t94" style="right:447.70px;top:743.00px;font-size:11px;line-height:13px;font-weight:normal;font-style:normal;color:#000;letter-spacing:-0.081px;">194,177</span>
<span class="t" id="t95" style="right:331.70px;top:743.00px;font-size:11px;line-height:13px;font-weight:normal;font-style:normal;color:#ff0000;letter-spacing:0.190px;">-8.97%</span>
<span class="t" id="t96" style="right:236.70px;top:743.00px;font-size:11px;line-height:13px;font-weight:normal;font-style:normal;color:#000;letter-spacing:-0.081px;">176,753</span>
<span class="t" id="t97" style="right:134.70px;top:743.00px;font-size:11px;line-height:13px;font-weight:normal;font-style:normal;color:#000;letter-spacing:-0.081px;">194,177</span>
<span class="t" id="t98" style="right:9.70px;top:743.00px;font-size:11px;line-height:13px;font-weight:normal;font-style:normal;color:#ff0000;letter-spacing:0.190px;">-0.09%</span>
<span class="t" id="t99" style="left:89.00px;top:759.00px;font-size:11px;line-height:13px;font-weight:normal;font-style:normal;color:#000;letter-spacing:-0.336px;">Feb 2010</span>
<span class="t" id="t100" style="left:151.00px;top:759.00px;font-size:11px;line-height:13px;font-weight:normal;font-style:normal;color:#000;letter-spacing:-0.098px;">Individual</span>
<span class="t" id="t101" style="left:214.00px;top:759.00px;font-size:11px;line-height:13px;font-weight:normal;font-style:normal;color:#000;letter-spacing:-0.732px;">FAX</span>
<span class="t" id="t102" style="right:625.70px;top:759.00px;font-size:11px;line-height:13px;font-weight:normal;font-style:normal;color:#000;letter-spacing:-0.081px;">200,210</span>
<span class="t" id="t103" style="right:539.70px;top:759.00px;font-size:11px;line-height:13px;font-weight:normal;font-style:normal;color:#000;letter-spacing:-0.081px;">204,965</span>
<span class="t" id="t104" style="right:447.70px;top:759.00px;font-size:11px;line-height:13px;font-weight:normal;font-style:normal;color:#000;letter-spacing:-0.081px;">201,726</span>
<span class="t" id="t105" style="right:331.70px;top:759.00px;font-size:11px;line-height:13px;font-weight:normal;font-style:normal;color:#000;letter-spacing:0.159px;">1.61%</span>
<span class="t" id="t106" style="right:236.70px;top:759.00px;font-size:11px;line-height:13px;font-weight:normal;font-style:normal;color:#000;letter-spacing:0.035px;">411,281</span>
<span class="t" id="t107" style="right:134.70px;top:759.00px;font-size:11px;line-height:13px;font-weight:normal;font-style:normal;color:#000;letter-spacing:-0.081px;">394,237</span>
<span class="t" id="t108" style="right:9.70px;top:759.00px;font-size:11px;line-height:13px;font-weight:normal;font-style:normal;color:#000;letter-spacing:0.159px;">0.04%</span>
<span class="t" id="t109" style="left:214.00px;top:775.00px;font-size:11px;line-height:13px;font-weight:normal;font-style:normal;color:#000;letter-spacing:-0.551px;">IDD</span>
<span class="t" id="t110" style="right:625.70px;top:775.00px;font-size:11px;line-height:13px;font-weight:normal;font-style:normal;color:#000;letter-spacing:-0.081px;">240,361</span>
<span class="t" id="t111" style="right:539.70px;top:775.00px;font-size:11px;line-height:13px;font-weight:normal;font-style:normal;color:#000;letter-spacing:-0.081px;">230,192</span>
<span class="t" id="t112" style="right:447.70px;top:775.00px;font-size:11px;line-height:13px;font-weight:normal;font-style:normal;color:#000;letter-spacing:-0.081px;">155,528</span>
<span class="t" id="t113" style="right:331.70px;top:775.00px;font-size:11px;line-height:13px;font-weight:normal;font-style:normal;color:#000;letter-spacing:0.115px;">48.01%</span>
<span class="t" id="t114" style="right:236.70px;top:775.00px;font-size:11px;line-height:13px;font-weight:normal;font-style:normal;color:#000;letter-spacing:-0.081px;">406,945</span>
<span class="t" id="t115" style="right:134.70px;top:775.00px;font-size:11px;line-height:13px;font-weight:normal;font-style:normal;color:#000;letter-spacing:-0.081px;">349,705</span>
<span class="t" id="t116" style="right:9.70px;top:775.00px;font-size:11px;line-height:13px;font-weight:normal;font-style:normal;color:#000;letter-spacing:0.159px;">0.16%</span>
<span class="t" id="t117" style="left:89.00px;top:791.00px;font-size:11px;line-height:13px;font-weight:normal;font-style:normal;color:#000;letter-spacing:-0.260px;">Mar 2010</span>
<span class="t" id="t118" style="left:151.00px;top:791.00px;font-size:11px;line-height:13px;font-weight:normal;font-style:normal;color:#000;letter-spacing:-0.098px;">Individual</span>
<span class="t" id="t119" style="left:214.00px;top:791.00px;font-size:11px;line-height:13px;font-weight:normal;font-style:normal;color:#000;letter-spacing:-0.732px;">FAX</span>
<span class="t" id="t120" style="right:625.70px;top:791.00px;font-size:11px;line-height:13px;font-weight:normal;font-style:normal;color:#000;letter-spacing:-0.081px;">183,460</span>
<span class="t" id="t121" style="right:539.70px;top:791.00px;font-size:11px;line-height:13px;font-weight:normal;font-style:normal;color:#000;letter-spacing:-0.081px;">186,184</span>
<span class="t" id="t122" style="right:447.70px;top:791.00px;font-size:11px;line-height:13px;font-weight:normal;font-style:normal;color:#000;letter-spacing:-0.081px;">193,515</span>
<span class="t" id="t123" style="right:331.70px;top:791.00px;font-size:11px;line-height:13px;font-weight:normal;font-style:normal;color:#ff0000;letter-spacing:0.190px;">-3.79%</span>
<span class="t" id="t124" style="right:236.70px;top:791.00px;font-size:11px;line-height:13px;font-weight:normal;font-style:normal;color:#000;letter-spacing:-0.081px;">597,465</span>
<span class="t" id="t125" style="right:134.70px;top:791.00px;font-size:11px;line-height:13px;font-weight:normal;font-style:normal;color:#000;letter-spacing:-0.081px;">587,752</span>
<span class="t" id="t126" style="right:9.70px;top:791.00px;font-size:11px;line-height:13px;font-weight:normal;font-style:normal;color:#000;letter-spacing:0.159px;">0.02%</span>
<span class="t" id="t127" style="left:214.00px;top:807.00px;font-size:11px;line-height:13px;font-weight:normal;font-style:normal;color:#000;letter-spacing:-0.551px;">IDD</span>
<span class="t" id="t128" style="right:625.70px;top:807.00px;font-size:11px;line-height:13px;font-weight:normal;font-style:normal;color:#000;letter-spacing:-0.081px;">239,329</span>
<span class="t" id="t129" style="right:539.70px;top:807.00px;font-size:11px;line-height:13px;font-weight:normal;font-style:normal;color:#000;letter-spacing:-0.081px;">233,061</span>
<span class="t" id="t130" style="right:447.70px;top:807.00px;font-size:11px;line-height:13px;font-weight:normal;font-style:normal;color:#000;letter-spacing:-0.081px;">258,436</span>
<span class="t" id="t131" style="right:331.70px;top:807.00px;font-size:11px;line-height:13px;font-weight:normal;font-style:normal;color:#ff0000;letter-spacing:0.190px;">-9.82%</span>
<span class="t" id="t132" style="right:236.70px;top:807.00px;font-size:11px;line-height:13px;font-weight:normal;font-style:normal;color:#000;letter-spacing:-0.081px;">640,006</span>
<span class="t" id="t133" style="right:134.70px;top:807.00px;font-size:11px;line-height:13px;font-weight:normal;font-style:normal;color:#000;letter-spacing:-0.081px;">608,141</span>
<span class="t" id="t134" style="right:9.70px;top:807.00px;font-size:11px;line-height:13px;font-weight:normal;font-style:normal;color:#000;letter-spacing:0.159px;">0.05%</span>
<span class="t" id="t135" style="left:89.00px;top:823.00px;font-size:11px;line-height:13px;font-weight:normal;font-style:normal;color:#000;letter-spacing:-0.131px;">Apr 2010</span>
<span class="t" id="t136" style="left:151.00px;top:823.00px;font-size:11px;line-height:13px;font-weight:normal;font-style:normal;color:#000;letter-spacing:-0.098px;">Individual</span>
<span class="t" id="t137" style="left:214.00px;top:823.00px;font-size:11px;line-height:13px;font-weight:normal;font-style:normal;color:#000;letter-spacing:-0.732px;">FAX</span>
<span class="t" id="t138" style="right:625.70px;top:823.00px;font-size:11px;line-height:13px;font-weight:normal;font-style:normal;color:#000;letter-spacing:-0.081px;">213,165</span>
<span class="t" id="t139" style="right:539.70px;top:823.00px;font-size:11px;line-height:13px;font-weight:normal;font-style:normal;color:#000;letter-spacing:-0.081px;">214,141</span>
<span class="t" id="t140" style="right:447.70px;top:823.00px;font-size:11px;line-height:13px;font-weight:normal;font-style:normal;color:#000;letter-spacing:-0.081px;">180,506</span>
<span class="t" id="t141" style="right:331.70px;top:823.00px;font-size:11px;line-height:13px;font-weight:normal;font-style:normal;color:#000;letter-spacing:0.115px;">18.63%</span>
<span class="t" id="t142" style="right:236.70px;top:823.00px;font-size:11px;line-height:13px;font-weight:normal;font-style:normal;color:#000;letter-spacing:0.035px;">811,606</span>
<span class="t" id="t143" style="right:134.70px;top:823.00px;font-size:11px;line-height:13px;font-weight:normal;font-style:normal;color:#000;letter-spacing:-0.081px;">768,258</span>
<span class="t" id="t144" style="right:9.70px;top:823.00px;font-size:11px;line-height:13px;font-weight:normal;font-style:normal;color:#000;letter-spacing:0.159px;">0.06%</span>
<span class="t" id="t145" style="left:214.00px;top:839.00px;font-size:11px;line-height:13px;font-weight:normal;font-style:normal;color:#000;letter-spacing:-0.551px;">IDD</span>
<span class="t" id="t146" style="right:625.70px;top:839.00px;font-size:11px;line-height:13px;font-weight:normal;font-style:normal;color:#000;letter-spacing:-0.081px;">186,613</span>
<span class="t" id="t147" style="right:539.70px;top:839.00px;font-size:11px;line-height:13px;font-weight:normal;font-style:normal;color:#000;letter-spacing:-0.081px;">191,604</span>
<span class="t" id="t148" style="right:447.70px;top:839.00px;font-size:11px;line-height:13px;font-weight:normal;font-style:normal;color:#000;letter-spacing:-0.081px;">201,446</span>
<span class="t" id="t149" style="right:331.70px;top:839.00px;font-size:11px;line-height:13px;font-weight:normal;font-style:normal;color:#ff0000;letter-spacing:0.190px;">-4.89%</span>
<span class="t" id="t150" style="right:236.70px;top:839.00px;font-size:11px;line-height:13px;font-weight:normal;font-style:normal;color:#000;letter-spacing:-0.081px;">831,610</span>
<span class="t" id="t151" style="right:134.70px;top:839.00px;font-size:11px;line-height:13px;font-weight:normal;font-style:normal;color:#000;letter-spacing:-0.081px;">809,587</span>
<span class="t" id="t152" style="right:9.70px;top:839.00px;font-size:11px;line-height:13px;font-weight:normal;font-style:normal;color:#000;letter-spacing:0.159px;">0.03%</span>
<span class="t" id="t153" style="left:89.00px;top:855.00px;font-size:11px;line-height:13px;font-weight:normal;font-style:normal;color:#000;letter-spacing:-0.414px;">May 2010</span>
<span class="t" id="t154" style="left:151.00px;top:855.00px;font-size:11px;line-height:13px;font-weight:normal;font-style:normal;color:#000;letter-spacing:-0.098px;">Individual</span>
<span class="t" id="t155" style="left:214.00px;top:855.00px;font-size:11px;line-height:13px;font-weight:normal;font-style:normal;color:#000;letter-spacing:-0.732px;">FAX</span>
<span class="t" id="t156" style="right:625.70px;top:855.00px;font-size:11px;line-height:13px;font-weight:normal;font-style:normal;color:#000;letter-spacing:-0.081px;">205,847</span>
<span class="t" id="t157" style="right:539.70px;top:855.00px;font-size:11px;line-height:13px;font-weight:normal;font-style:normal;color:#000;letter-spacing:-0.081px;">207,401</span>
<span class="t" id="t158" style="right:447.70px;top:855.00px;font-size:11px;line-height:13px;font-weight:normal;font-style:normal;color:#000;letter-spacing:-0.081px;">198,452</span>
<span class="t" id="t159" style="right:331.70px;top:855.00px;font-size:11px;line-height:13px;font-weight:normal;font-style:normal;color:#000;letter-spacing:0.159px;">4.51%</span>
<span class="t" id="t160" style="right:236.70px;top:855.00px;font-size:11px;line-height:13px;font-weight:normal;font-style:normal;color:#000;letter-spacing:-0.061px;">1,019,007</span>
<span class="t" id="t161" style="right:134.70px;top:855.00px;font-size:11px;line-height:13px;font-weight:normal;font-style:normal;color:#000;letter-spacing:-0.081px;">966,710</span>
<span class="t" id="t162" style="right:9.70px;top:855.00px;font-size:11px;line-height:13px;font-weight:normal;font-style:normal;color:#000;letter-spacing:0.159px;">0.05%</span>
<span class="t" id="t163" style="left:214.00px;top:871.00px;font-size:11px;line-height:13px;font-weight:normal;font-style:normal;color:#000;letter-spacing:-0.551px;">IDD</span>
<span class="t" id="t164" style="right:625.70px;top:871.00px;font-size:11px;line-height:13px;font-weight:normal;font-style:normal;color:#000;letter-spacing:-0.081px;">222,348</span>
<span class="t" id="t165" style="right:539.70px;top:871.00px;font-size:11px;line-height:13px;font-weight:normal;font-style:normal;color:#000;letter-spacing:-0.081px;">224,326</span>
<span class="t" id="t166" style="right:447.70px;top:871.00px;font-size:11px;line-height:13px;font-weight:normal;font-style:normal;color:#000;letter-spacing:-0.081px;">148,854</span>
<span class="t" id="t167" style="right:331.70px;top:871.00px;font-size:11px;line-height:13px;font-weight:normal;font-style:normal;color:#000;letter-spacing:0.115px;">50.70%</span>
<span class="t" id="t168" style="right:236.70px;top:871.00px;font-size:11px;line-height:13px;font-weight:normal;font-style:normal;color:#000;letter-spacing:-0.061px;">1,055,936</span>
<span class="t" id="t169" style="right:134.70px;top:871.00px;font-size:11px;line-height:13px;font-weight:normal;font-style:normal;color:#000;letter-spacing:-0.081px;">958,441</span>
<span class="t" id="t170" style="right:9.70px;top:871.00px;font-size:11px;line-height:13px;font-weight:normal;font-style:normal;color:#000;letter-spacing:0.159px;">0.10%</span>
<span class="t" id="t171" style="left:89.00px;top:887.00px;font-size:11px;line-height:13px;font-weight:normal;font-style:normal;color:#000;letter-spacing:-0.234px;">Jun 2010</span>
<span class="t" id="t172" style="left:151.00px;top:887.00px;font-size:11px;line-height:13px;font-weight:normal;font-style:normal;color:#000;letter-spacing:-0.098px;">Individual</span>
<span class="t" id="t173" style="left:214.00px;top:887.00px;font-size:11px;line-height:13px;font-weight:normal;font-style:normal;color:#000;letter-spacing:-0.732px;">FAX</span>
<span class="t" id="t174" style="right:625.70px;top:887.00px;font-size:11px;line-height:13px;font-weight:normal;font-style:normal;color:#000;letter-spacing:-0.081px;">234,210</span>
<span class="t" id="t175" style="right:539.70px;top:887.00px;font-size:11px;line-height:13px;font-weight:normal;font-style:normal;color:#000;letter-spacing:-0.081px;">233,687</span>
<span class="t" id="t176" style="right:447.70px;top:887.00px;font-size:11px;line-height:13px;font-weight:normal;font-style:normal;color:#000;letter-spacing:-0.081px;">200,626</span>
<span class="t" id="t177" style="right:331.70px;top:887.00px;font-size:11px;line-height:13px;font-weight:normal;font-style:normal;color:#000;letter-spacing:0.115px;">16.48%</span>
<span class="t" id="t178" style="right:236.70px;top:887.00px;font-size:11px;line-height:13px;font-weight:normal;font-style:normal;color:#000;letter-spacing:-0.061px;">1,252,694</span>
<span class="t" id="t179" style="right:134.70px;top:887.00px;font-size:11px;line-height:13px;font-weight:normal;font-style:normal;color:#000;letter-spacing:-0.061px;">1,167,336</span>
<span class="t" id="t180" style="right:9.70px;top:887.00px;font-size:11px;line-height:13px;font-weight:normal;font-style:normal;color:#000;letter-spacing:0.159px;">0.07%</span>
<span class="t" id="t181" style="left:214.00px;top:903.00px;font-size:11px;line-height:13px;font-weight:normal;font-style:normal;color:#000;letter-spacing:-0.551px;">IDD</span>
<span class="t" id="t182" style="right:625.70px;top:903.00px;font-size:11px;line-height:13px;font-weight:normal;font-style:normal;color:#000;letter-spacing:-0.081px;">209,491</span>
<span class="t" id="t183" style="right:539.70px;top:903.00px;font-size:11px;line-height:13px;font-weight:normal;font-style:normal;color:#000;letter-spacing:-0.081px;">214,658</span>
<span class="t" id="t184" style="right:447.70px;top:903.00px;font-size:11px;line-height:13px;font-weight:normal;font-style:normal;color:#000;letter-spacing:-0.081px;">165,907</span>
<span class="t" id="t185" style="right:331.70px;top:903.00px;font-size:11px;line-height:13px;font-weight:normal;font-style:normal;color:#000;letter-spacing:0.115px;">29.38%</span>
<span class="t" id="t186" style="right:236.70px;top:903.00px;font-size:11px;line-height:13px;font-weight:normal;font-style:normal;color:#000;letter-spacing:-0.061px;">1,270,594</span>
<span class="t" id="t187" style="right:134.70px;top:903.00px;font-size:11px;line-height:13px;font-weight:normal;font-style:normal;color:#000;letter-spacing:-0.061px;">1,124,348</span>
<span class="t" id="t188" style="right:9.70px;top:903.00px;font-size:11px;line-height:13px;font-weight:normal;font-style:normal;color:#000;letter-spacing:0.159px;">0.13%</span>
<span class="t" id="t189" style="left:89.00px;top:919.00px;font-size:11px;line-height:13px;font-weight:normal;font-style:normal;color:#000;letter-spacing:-0.125px;">Jul 2010</span>
<span class="t" id="t190" style="left:151.00px;top:919.00px;font-size:11px;line-height:13px;font-weight:normal;font-style:normal;color:#000;letter-spacing:-0.098px;">Individual</span>
<span class="t" id="t191" style="left:214.00px;top:919.00px;font-size:11px;line-height:13px;font-weight:normal;font-style:normal;color:#000;letter-spacing:-0.732px;">FAX</span>
<span class="t" id="t192" style="right:625.70px;top:919.00px;font-size:11px;line-height:13px;font-weight:normal;font-style:normal;color:#000;letter-spacing:-0.081px;">230,733</span>
<span class="t" id="t193" style="right:539.70px;top:919.00px;font-size:11px;line-height:13px;font-weight:normal;font-style:normal;color:#000;letter-spacing:-0.081px;">233,762</span>
<span class="t" id="t194" style="right:447.70px;top:919.00px;font-size:11px;line-height:13px;font-weight:normal;font-style:normal;color:#000;letter-spacing:-0.081px;">148,484</span>
<span class="t" id="t195" style="right:331.70px;top:919.00px;font-size:11px;line-height:13px;font-weight:normal;font-style:normal;color:#000;letter-spacing:0.115px;">57.43%</span>
<span class="t" id="t196" style="right:236.70px;top:919.00px;font-size:11px;line-height:13px;font-weight:normal;font-style:normal;color:#000;letter-spacing:-0.061px;">1,486,456</span>
<span class="t" id="t197" style="right:134.70px;top:919.00px;font-size:11px;line-height:13px;font-weight:normal;font-style:normal;color:#000;letter-spacing:-0.061px;">1,315,820</span>
<span class="t" id="t198" style="right:9.70px;top:919.00px;font-size:11px;line-height:13px;font-weight:normal;font-style:normal;color:#000;letter-spacing:0.159px;">0.13%</span>
<span class="t" id="t199" style="left:214.00px;top:935.00px;font-size:11px;line-height:13px;font-weight:normal;font-style:normal;color:#000;letter-spacing:-0.551px;">IDD</span>
<span class="t" id="t200" style="right:625.70px;top:935.00px;font-size:11px;line-height:13px;font-weight:normal;font-style:normal;color:#000;letter-spacing:-0.081px;">269,430</span>
<span class="t" id="t201" style="right:539.70px;top:935.00px;font-size:11px;line-height:13px;font-weight:normal;font-style:normal;color:#000;letter-spacing:-0.081px;">258,072</span>
<span class="t" id="t202" style="right:447.70px;top:935.00px;font-size:11px;line-height:13px;font-weight:normal;font-style:normal;color:#000;letter-spacing:-0.081px;">212,501</span>
<span class="t" id="t203" style="right:331.70px;top:935.00px;font-size:11px;line-height:13px;font-weight:normal;font-style:normal;color:#000;letter-spacing:0.115px;">21.45%</span>
<span class="t" id="t204" style="right:236.70px;top:935.00px;font-size:11px;line-height:13px;font-weight:normal;font-style:normal;color:#000;letter-spacing:-0.061px;">1,528,666</span>
<span class="t" id="t205" style="right:134.70px;top:935.00px;font-size:11px;line-height:13px;font-weight:normal;font-style:normal;color:#000;letter-spacing:-0.061px;">1,336,849</span>
<span class="t" id="t206" style="right:9.70px;top:935.00px;font-size:11px;line-height:13px;font-weight:normal;font-style:normal;color:#000;letter-spacing:0.159px;">0.14%</span>
<span class="t" id="t207" style="left:89.00px;top:951.00px;font-size:11px;line-height:13px;font-weight:normal;font-style:normal;color:#000;letter-spacing:-0.313px;">Aug 2010</span>
<span class="t" id="t208" style="left:151.00px;top:951.00px;font-size:11px;line-height:13px;font-weight:normal;font-style:normal;color:#000;letter-spacing:-0.098px;">Individual</span>
<span class="t" id="t209" style="left:214.00px;top:951.00px;font-size:11px;line-height:13px;font-weight:normal;font-style:normal;color:#000;letter-spacing:-0.732px;">FAX</span>
<span class="t" id="t210" style="right:625.70px;top:951.00px;font-size:11px;line-height:13px;font-weight:normal;font-style:normal;color:#000;letter-spacing:0.035px;">211,226</span>
<span class="t" id="t211" style="right:539.70px;top:951.00px;font-size:11px;line-height:13px;font-weight:normal;font-style:normal;color:#000;letter-spacing:-0.081px;">217,588</span>
<span class="t" id="t212" style="right:447.70px;top:951.00px;font-size:11px;line-height:13px;font-weight:normal;font-style:normal;color:#000;letter-spacing:-0.081px;">206,432</span>
<span class="t" id="t213" style="right:331.70px;top:951.00px;font-size:11px;line-height:13px;font-weight:normal;font-style:normal;color:#000;letter-spacing:0.159px;">5.40%</span>
<span class="t" id="t214" style="right:236.70px;top:951.00px;font-size:11px;line-height:13px;font-weight:normal;font-style:normal;color:#000;letter-spacing:-0.061px;">1,704,044</span>
<span class="t" id="t215" style="right:134.70px;top:951.00px;font-size:11px;line-height:13px;font-weight:normal;font-style:normal;color:#000;letter-spacing:-0.061px;">1,522,252</span>
<span class="t" id="t216" style="right:9.70px;top:951.00px;font-size:11px;line-height:13px;font-weight:normal;font-style:normal;color:#000;letter-spacing:0.159px;">0.12%</span>
<span class="t" id="t217" style="left:214.00px;top:967.00px;font-size:11px;line-height:13px;font-weight:normal;font-style:normal;color:#000;letter-spacing:-0.551px;">IDD</span>
<span class="t" id="t218" style="right:625.70px;top:967.00px;font-size:11px;line-height:13px;font-weight:normal;font-style:normal;color:#000;letter-spacing:-0.081px;">222,255</span>
<span class="t" id="t219" style="right:539.70px;top:967.00px;font-size:11px;line-height:13px;font-weight:normal;font-style:normal;color:#000;letter-spacing:-0.081px;">228,448</span>
<span class="t" id="t220" style="right:447.70px;top:967.00px;font-size:11px;line-height:13px;font-weight:normal;font-style:normal;color:#000;letter-spacing:-0.081px;">202,180</span>
<span class="t" id="t221" style="right:331.70px;top:967.00px;font-size:11px;line-height:13px;font-weight:normal;font-style:normal;color:#000;letter-spacing:0.115px;">12.99%</span>
<span class="t" id="t222" style="right:236.70px;top:967.00px;font-size:11px;line-height:13px;font-weight:normal;font-style:normal;color:#000;letter-spacing:0.030px;">1,757,114</span>
<span class="t" id="t223" style="right:134.70px;top:967.00px;font-size:11px;line-height:13px;font-weight:normal;font-style:normal;color:#000;letter-spacing:-0.061px;">1,539,029</span>
<span class="t" id="t224" style="right:9.70px;top:967.00px;font-size:11px;line-height:13px;font-weight:normal;font-style:normal;color:#000;letter-spacing:0.159px;">0.14%</span>
<span class="t" id="t225" style="left:89.00px;top:983.00px;font-size:11px;line-height:13px;font-weight:normal;font-style:normal;color:#000;letter-spacing:-0.389px;">Sep 2010</span>
<span class="t" id="t226" style="left:151.00px;top:983.00px;font-size:11px;line-height:13px;font-weight:normal;font-style:normal;color:#000;letter-spacing:-0.098px;">Individual</span>
<span class="t" id="t227" style="left:214.00px;top:983.00px;font-size:11px;line-height:13px;font-weight:normal;font-style:normal;color:#000;letter-spacing:-0.732px;">FAX</span>
<span class="t" id="t228" style="right:625.70px;top:983.00px;font-size:11px;line-height:13px;font-weight:normal;font-style:normal;color:#000;letter-spacing:-0.081px;">238,593</span>
<span class="t" id="t229" style="right:539.70px;top:983.00px;font-size:11px;line-height:13px;font-weight:normal;font-style:normal;color:#000;letter-spacing:-0.081px;">234,244</span>
<span class="t" id="t230" style="right:447.70px;top:983.00px;font-size:11px;line-height:13px;font-weight:normal;font-style:normal;color:#000;letter-spacing:-0.081px;">201,977</span>
<span class="t" id="t231" style="right:331.70px;top:983.00px;font-size:11px;line-height:13px;font-weight:normal;font-style:normal;color:#000;letter-spacing:0.115px;">15.98%</span>
<span class="t" id="t232" style="right:236.70px;top:983.00px;font-size:11px;line-height:13px;font-weight:normal;font-style:normal;color:#000;letter-spacing:-0.061px;">1,938,288</span>
<span class="t" id="t233" style="right:134.70px;top:983.00px;font-size:11px;line-height:13px;font-weight:normal;font-style:normal;color:#000;letter-spacing:-0.061px;">1,724,229</span>
<span class="t" id="t234" style="right:9.70px;top:983.00px;font-size:11px;line-height:13px;font-weight:normal;font-style:normal;color:#000;letter-spacing:0.159px;">0.12%</span>
<span class="t" id="t235" style="left:214.00px;top:999.00px;font-size:11px;line-height:13px;font-weight:normal;font-style:normal;color:#000;letter-spacing:-0.551px;">IDD</span>
<span class="t" id="t236" style="right:625.70px;top:999.00px;font-size:11px;line-height:13px;font-weight:normal;font-style:normal;color:#000;letter-spacing:-0.081px;">187,093</span>
<span class="t" id="t237" style="right:539.70px;top:999.00px;font-size:11px;line-height:13px;font-weight:normal;font-style:normal;color:#000;letter-spacing:-0.081px;">189,061</span>
<span class="t" id="t238" style="right:447.70px;top:999.00px;font-size:11px;line-height:13px;font-weight:normal;font-style:normal;color:#000;letter-spacing:-0.081px;">200,221</span>
<span class="t" id="t239" style="right:331.70px;top:999.00px;font-size:11px;line-height:13px;font-weight:normal;font-style:normal;color:#ff0000;letter-spacing:0.190px;">-5.57%</span>
<span class="t" id="t240" style="right:236.70px;top:999.00px;font-size:11px;line-height:13px;font-weight:normal;font-style:normal;color:#000;letter-spacing:-0.061px;">1,946,175</span>
<span class="t" id="t241" style="right:134.70px;top:999.00px;font-size:11px;line-height:13px;font-weight:normal;font-style:normal;color:#000;letter-spacing:-0.061px;">1,739,250</span>
<span class="t" id="t242" style="right:9.70px;top:999.00px;font-size:11px;line-height:13px;font-weight:normal;font-style:normal;color:#000;letter-spacing:0.159px;">0.12%</span>
<span class="t" id="t243" style="left:89.00px;top:1015.00px;font-size:11px;line-height:13px;font-weight:normal;font-style:normal;color:#000;letter-spacing:-0.156px;">Oct 2010</span>
<span class="t" id="t244" style="left:151.00px;top:1015.00px;font-size:11px;line-height:13px;font-weight:normal;font-style:normal;color:#000;letter-spacing:-0.098px;">Individual</span>
<span class="t" id="t245" style="left:214.00px;top:1015.00px;font-size:11px;line-height:13px;font-weight:normal;font-style:normal;color:#000;letter-spacing:-0.732px;">FAX</span>
<span class="t" id="t246" style="right:625.70px;top:1015.00px;font-size:11px;line-height:13px;font-weight:normal;font-style:normal;color:#000;letter-spacing:-0.081px;">187,057</span>
<span class="t" id="t247" style="right:539.70px;top:1015.00px;font-size:11px;line-height:13px;font-weight:normal;font-style:normal;color:#000;letter-spacing:-0.081px;">183,457</span>
<span class="t" id="t248" style="right:447.70px;top:1015.00px;font-size:11px;line-height:13px;font-weight:normal;font-style:normal;color:#000;letter-spacing:-0.081px;">171,102</span>
<span class="t" id="t249" style="right:331.70px;top:1015.00px;font-size:11px;line-height:13px;font-weight:normal;font-style:normal;color:#000;letter-spacing:0.159px;">7.22%</span>
<span class="t" id="t250" style="right:236.70px;top:1015.00px;font-size:11px;line-height:13px;font-weight:normal;font-style:normal;color:#000;letter-spacing:-0.061px;">2,121,745</span>
<span class="t" id="t251" style="right:134.70px;top:1015.00px;font-size:11px;line-height:13px;font-weight:normal;font-style:normal;color:#000;letter-spacing:-0.061px;">1,895,331</span>
<span class="t" id="t252" style="right:9.70px;top:1015.00px;font-size:11px;line-height:13px;font-weight:normal;font-style:normal;color:#000;letter-spacing:0.159px;">0.12%</span>
<span class="t" id="t253" style="left:214.00px;top:1031.00px;font-size:11px;line-height:13px;font-weight:normal;font-style:normal;color:#000;letter-spacing:-0.551px;">IDD</span>
<span class="t" id="t254" style="right:625.70px;top:1031.00px;font-size:11px;line-height:13px;font-weight:normal;font-style:normal;color:#000;letter-spacing:-0.081px;">227,101</span>
<span class="t" id="t255" style="right:539.70px;top:1031.00px;font-size:11px;line-height:13px;font-weight:normal;font-style:normal;color:#000;letter-spacing:-0.081px;">233,834</span>
<span class="t" id="t256" style="right:447.70px;top:1031.00px;font-size:11px;line-height:13px;font-weight:normal;font-style:normal;color:#000;letter-spacing:-0.081px;">198,156</span>
<span class="t" id="t257" style="right:331.70px;top:1031.00px;font-size:11px;line-height:13px;font-weight:normal;font-style:normal;color:#000;letter-spacing:0.115px;">18.01%</span>
<span class="t" id="t258" style="right:236.70px;top:1031.00px;font-size:11px;line-height:13px;font-weight:normal;font-style:normal;color:#000;letter-spacing:-0.061px;">2,180,009</span>
<span class="t" id="t259" style="right:134.70px;top:1031.00px;font-size:11px;line-height:13px;font-weight:normal;font-style:normal;color:#000;letter-spacing:-0.061px;">1,937,406</span>
<span class="t" id="t260" style="right:9.70px;top:1031.00px;font-size:11px;line-height:13px;font-weight:normal;font-style:normal;color:#000;letter-spacing:0.159px;">0.13%</span>
<span class="t" id="t261" style="left:89.00px;top:1047.00px;font-size:11px;line-height:13px;font-weight:normal;font-style:normal;color:#000;letter-spacing:-0.362px;">Nov 2010</span>
<span class="t" id="t262" style="left:151.00px;top:1047.00px;font-size:11px;line-height:13px;font-weight:normal;font-style:normal;color:#000;letter-spacing:-0.098px;">Individual</span>
<span class="t" id="t263" style="left:214.00px;top:1047.00px;font-size:11px;line-height:13px;font-weight:normal;font-style:normal;color:#000;letter-spacing:-0.732px;">FAX</span>
<span class="t" id="t264" style="right:625.70px;top:1047.00px;font-size:11px;line-height:13px;font-weight:normal;font-style:normal;color:#000;letter-spacing:-0.081px;">243,900</span>
<span class="t" id="t265" style="right:539.70px;top:1047.00px;font-size:11px;line-height:13px;font-weight:normal;font-style:normal;color:#000;letter-spacing:-0.081px;">246,800</span>
<span class="t" id="t266" style="right:447.70px;top:1047.00px;font-size:11px;line-height:13px;font-weight:normal;font-style:normal;color:#000;letter-spacing:-0.081px;">201,340</span>
<span class="t" id="t267" style="right:331.70px;top:1047.00px;font-size:11px;line-height:13px;font-weight:normal;font-style:normal;color:#000;letter-spacing:0.115px;">22.58%</span>
<span class="t" id="t268" style="right:236.70px;top:1047.00px;font-size:11px;line-height:13px;font-weight:normal;font-style:normal;color:#000;letter-spacing:-0.061px;">2,368,545</span>
<span class="t" id="t269" style="right:134.70px;top:1047.00px;font-size:11px;line-height:13px;font-weight:normal;font-style:normal;color:#000;letter-spacing:-0.061px;">2,096,671</span>
<span class="t" id="t270" style="right:9.70px;top:1047.00px;font-size:11px;line-height:13px;font-weight:normal;font-style:normal;color:#000;letter-spacing:0.159px;">0.13%</span>
<svg style="left:422px;top:6px" width="16" height="17" viewBox="0 0 16 17">
<defs><radialGradient id="bg1" cx="0.48" cy="0.3" r="0.6"><stop offset="0" stop-color="#fff6c0"/><stop offset="0.45" stop-color="#f8d060"/><stop offset="1" stop-color="#eba628"/></radialGradient></defs>
<ellipse cx="8" cy="14.6" rx="1.7" ry="1.6" fill="#e8a020"/>
<path d="M5.2,1 L10.8,1 Q11.6,1 11.7,2.2 L12.2,8.5 Q12.6,11.5 15.6,13.3 L15.6,14 L0.4,14 L0.4,13.3 Q3.4,11.5 3.8,8.5 L4.3,2.2 Q4.4,1 5.2,1 Z" fill="url(#bg1)" stroke="#e0901a" stroke-width="0.9"/>
</svg>
<svg style="left:748px;top:6px" width="17" height="17" viewBox="0 0 17 17">
<defs><linearGradient id="ng" x1="0" y1="0" x2="1" y2="1"><stop offset="0" stop-color="#ffffff"/><stop offset="0.5" stop-color="#f0eef8"/><stop offset="1" stop-color="#d0cce8"/></linearGradient></defs>
<rect x="0.9" y="1.6" width="11" height="13.8" fill="url(#ng)" stroke="#8f86b0" stroke-width="0.9"/>
<path d="M10.20,1.10 L11.54,2.57 L13.52,2.48 L13.43,4.46 L14.90,5.80 L13.43,7.14 L13.52,9.12 L11.54,9.03 L10.20,10.50 L8.86,9.03 L6.88,9.12 L6.97,7.14 L5.50,5.80 L6.97,4.46 L6.88,2.48 L8.86,2.57 Z" fill="#b23a0e"/><circle cx="10.2" cy="5.8" r="3.1" fill="#ffe61e"/><path d="M10.2,2.8 L11.0,5.0 L13.2,5.8 L11.0,6.6 L10.2,8.8 L9.399999999999999,6.6 L7.199999999999999,5.8 L9.399999999999999,5.0 Z" fill="#fffbd0"/>
</svg>
<svg style="left:818px;top:7px" width="16" height="14" viewBox="0 0 16 14">
<path d="M0.8,12 L0.8,2 Q0.8,1.2 1.6,1.2 L5.4,1.2 L6.8,3 L11.6,3 Q12.4,3 12.4,3.8 L12.4,5.2" fill="#f2eea4" stroke="#b39a2c" stroke-width="1"/>
<path d="M0.9,12.4 L3,5.6 Q3.2,5 3.9,5 L14.3,5 Q15.2,5 14.9,5.9 L13,12 Q12.8,12.6 12.1,12.6 L1.2,12.6 Z" fill="#f1eda0" stroke="#b39a2c" stroke-width="1"/>
</svg>
<svg style="left:0;top:0" width="977" height="60" viewBox="0 0 977 60"><rect x="961" y="35" width="2" height="2" fill="#1a1268"/><rect x="963" y="36.5" width="1.5" height="1" fill="#6a6a88" opacity=".6"/><rect x="961" y="39" width="2" height="2" fill="#1a1268"/><rect x="963" y="40.5" width="1.5" height="1" fill="#6a6a88" opacity=".6"/><rect x="961" y="43" width="2" height="2" fill="#1a1268"/><rect x="963" y="44.5" width="1.5" height="1" fill="#6a6a88" opacity=".6"/><rect x="964" y="36" width="8" height="1" fill="#5c5c5c"/><rect x="965" y="37" width="8" height="1" fill="#9a9aa4" opacity=".6"/><rect x="964" y="40" width="8" height="1" fill="#5c5c5c"/><rect x="965" y="41" width="8" height="1" fill="#9a9aa4" opacity=".6"/><rect x="964" y="44" width="3" height="1" fill="#5c5c5c"/><rect x="965" y="45" width="3" height="1" fill="#9a9aa4" opacity=".6"/><path d="M969,44 L974.5,44 L971.75,47.2 Z" fill="#000"/></svg>
</div>
</body></html>
